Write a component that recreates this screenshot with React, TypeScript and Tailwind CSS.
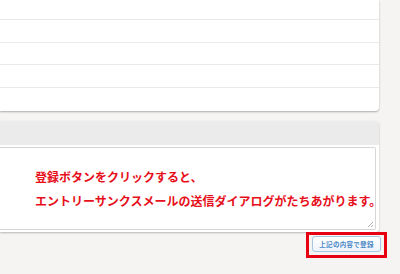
import React from "react";

export default function App() {
  const jp = { fontFamily: '"Noto Sans CJK JP", "Noto Sans", sans-serif' };
  return (
    <div className="w-[400px] h-[274px] overflow-hidden bg-[#f5f4f2]" style={jp}>
      <div className="w-[379px] flex flex-col">
        {/* top card */}
        <div className="bg-white rounded-br-[4px] shadow-[0_1px_2px_rgba(0,0,0,0.3)] flex flex-col">
          <div className="h-[20px] border-b border-[#e9e9e9]" />
          <div className="h-[23px] border-b border-[#e9e9e9]" />
          <div className="h-[22px] border-b border-[#e9e9e9]" />
          <div className="h-[23px] border-b border-[#e9e9e9]" />
          <div className="h-[23px]" />
        </div>

        {/* panel */}
        <div className="mt-[10px] rounded-tr-[4px] rounded-br-[3px] shadow-[0_1px_2px_rgba(0,0,0,0.25)] bg-white flex flex-col">
          <div className="h-[24px] bg-[#ebebeb] rounded-tr-[4px]" />
          <div className="pt-[2px] pb-[2px] pr-[3px]">
            <div className="relative h-[83px] border border-l-0 border-[#d6d6d6] rounded-r-[2px] bg-white flex flex-col justify-center pl-[35px] gap-[12px]">
              <div className="text-[12px] leading-[12px] font-bold text-[#e60f1a] whitespace-nowrap">
                登録ボタンをクリックすると、
              </div>
              <div className="text-[12px] leading-[12px] font-bold text-[#e60f1a] whitespace-nowrap">
                エントリーサンクスメールの送信ダイアログがたちあがります。
              </div>
              <svg className="absolute right-[1px] bottom-[1px]" width="7" height="7" viewBox="0 0 7 7">
                <line x1="6" y1="1" x2="1" y2="6" stroke="#9a9a9a" strokeWidth="0.8" />
                <line x1="6" y1="4" x2="4" y2="6" stroke="#9a9a9a" strokeWidth="0.8" />
              </svg>
            </div>
          </div>
        </div>
      </div>

      {/* button row */}
      <div className="flex justify-end pr-[13px]">
        <div className="w-[81px] h-[26px] border-[3px] border-[#e60012] flex items-start justify-center pt-[1px]">
          <div className="w-[69px] h-[16px] rounded-[3px] border border-[#a8c6e4] bg-gradient-to-b from-white to-[#eef4fa] flex items-center justify-center">
            <span className="text-[6.5px] leading-none font-bold text-[#4a87c4] tracking-[0.3px] whitespace-nowrap">
              上記の内容で登録
            </span>
          </div>
        </div>
      </div>
    </div>
  );
}
